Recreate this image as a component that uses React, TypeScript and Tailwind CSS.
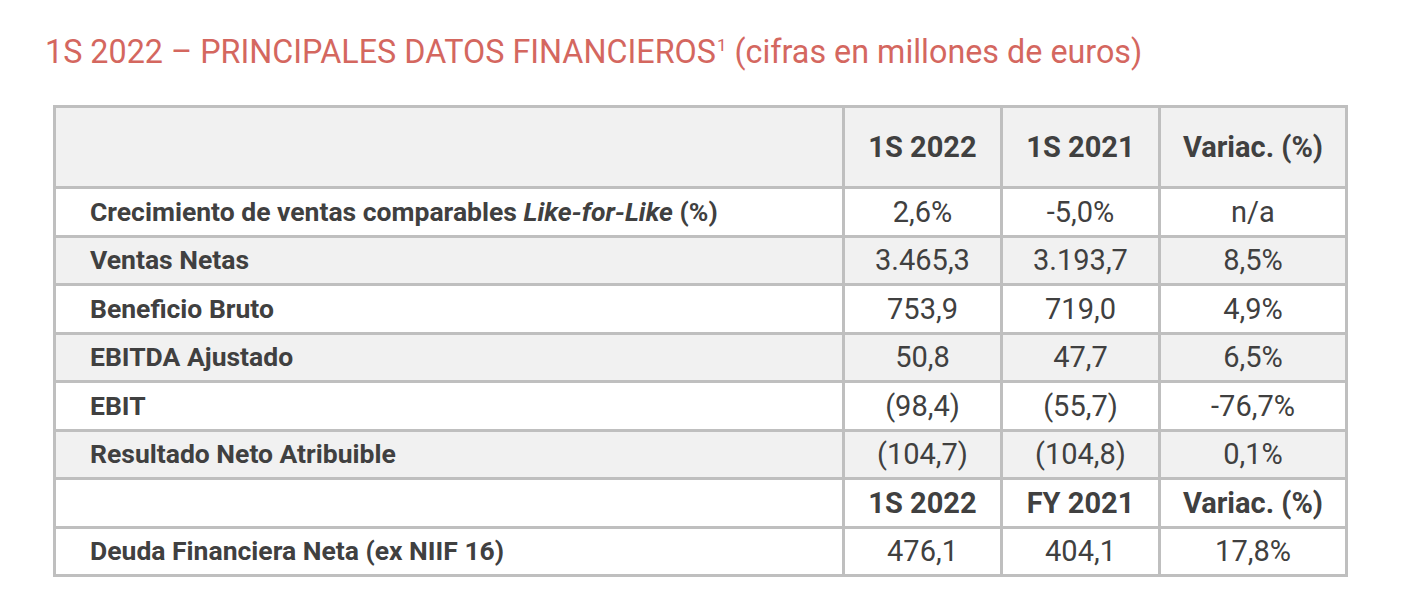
import React from "react";

type Row = {
  label: React.ReactNode;
  a: string;
  b: string;
  c: string;
  bg: string;
  head?: boolean;
};

const rows: Row[] = [
  {
    label: (
      <>
        Crecimiento de ventas comparables <i>Like-for-Like</i> (%)
      </>
    ),
    a: "2,6%",
    b: "-5,0%",
    c: "n/a",
    bg: "bg-white",
  },
  { label: "Ventas Netas", a: "3.465,3", b: "3.193,7", c: "8,5%", bg: "bg-[#f1f1f1]" },
  { label: "Beneficio Bruto", a: "753,9", b: "719,0", c: "4,9%", bg: "bg-white" },
  { label: "EBITDA Ajustado", a: "50,8", b: "47,7", c: "6,5%", bg: "bg-[#f1f1f1]" },
  { label: "EBIT", a: "(98,4)", b: "(55,7)", c: "-76,7%", bg: "bg-white" },
  { label: "Resultado Neto Atribuible", a: "(104,7)", b: "(104,8)", c: "0,1%", bg: "bg-[#f1f1f1]" },
  { label: "", a: "1S 2022", b: "FY 2021", c: "Variac. (%)", bg: "bg-white", head: true },
  { label: "Deuda Financiera Neta (ex NIIF 16)", a: "476,1", b: "404,1", c: "17,8%", bg: "bg-white" },
];

function Val({ v, head, bg }: { v: string; head?: boolean; bg: string }) {
  return (
    <div className={`${bg} h-[45.5px] flex items-center justify-center`}>
      {head ? (
        <span className="font-bold text-[29px] leading-none">{v}</span>
      ) : (
        <span className="text-[29px] leading-none">{v}</span>
      )}
    </div>
  );
}

export default function App() {
  return (
    <div
      className="w-[1418px] h-[609px] bg-white pt-[36px] pl-[45px]"
      style={{ fontFamily: "Roboto, 'Liberation Sans', sans-serif" }}
    >
      <h1 className="text-[32.3px] leading-none text-[#d4675f] font-normal whitespace-nowrap">
        1S 2022 – PRINCIPALES DATOS FINANCIEROS
        <span className="text-[17px] relative top-[-12px] ml-[1px]">1</span> (cifras en millones de euros)
      </h1>

      <div className="mt-[37px] ml-[8px] w-[1295px] bg-[#bfbfbf] p-[3px] grid grid-cols-[786px_155px_155px_184px] gap-[3px] text-[#404040]">
        {/* header */}
        <div className="bg-[#f1f1f1] h-[78px]" />
        <div className="bg-[#f1f1f1] h-[78px] flex items-center justify-center">
          <span className="font-bold text-[29px] leading-none">1S 2022</span>
        </div>
        <div className="bg-[#f1f1f1] h-[78px] flex items-center justify-center">
          <span className="font-bold text-[29px] leading-none">1S 2021</span>
        </div>
        <div className="bg-[#f1f1f1] h-[78px] flex items-center justify-center">
          <span className="font-bold text-[29px] leading-none">Variac. (%)</span>
        </div>

        {rows.map((r, i) => (
          <React.Fragment key={i}>
            <div className={`${r.bg} h-[45.5px] flex items-center pl-[34px]`}>
              <span className="font-bold text-[26.5px] leading-none whitespace-nowrap">{r.label}</span>
            </div>
            <Val v={r.a} head={r.head} bg={r.bg} />
            <Val v={r.b} head={r.head} bg={r.bg} />
            <Val v={r.c} head={r.head} bg={r.bg} />
          </React.Fragment>
        ))}
      </div>
    </div>
  );
}
